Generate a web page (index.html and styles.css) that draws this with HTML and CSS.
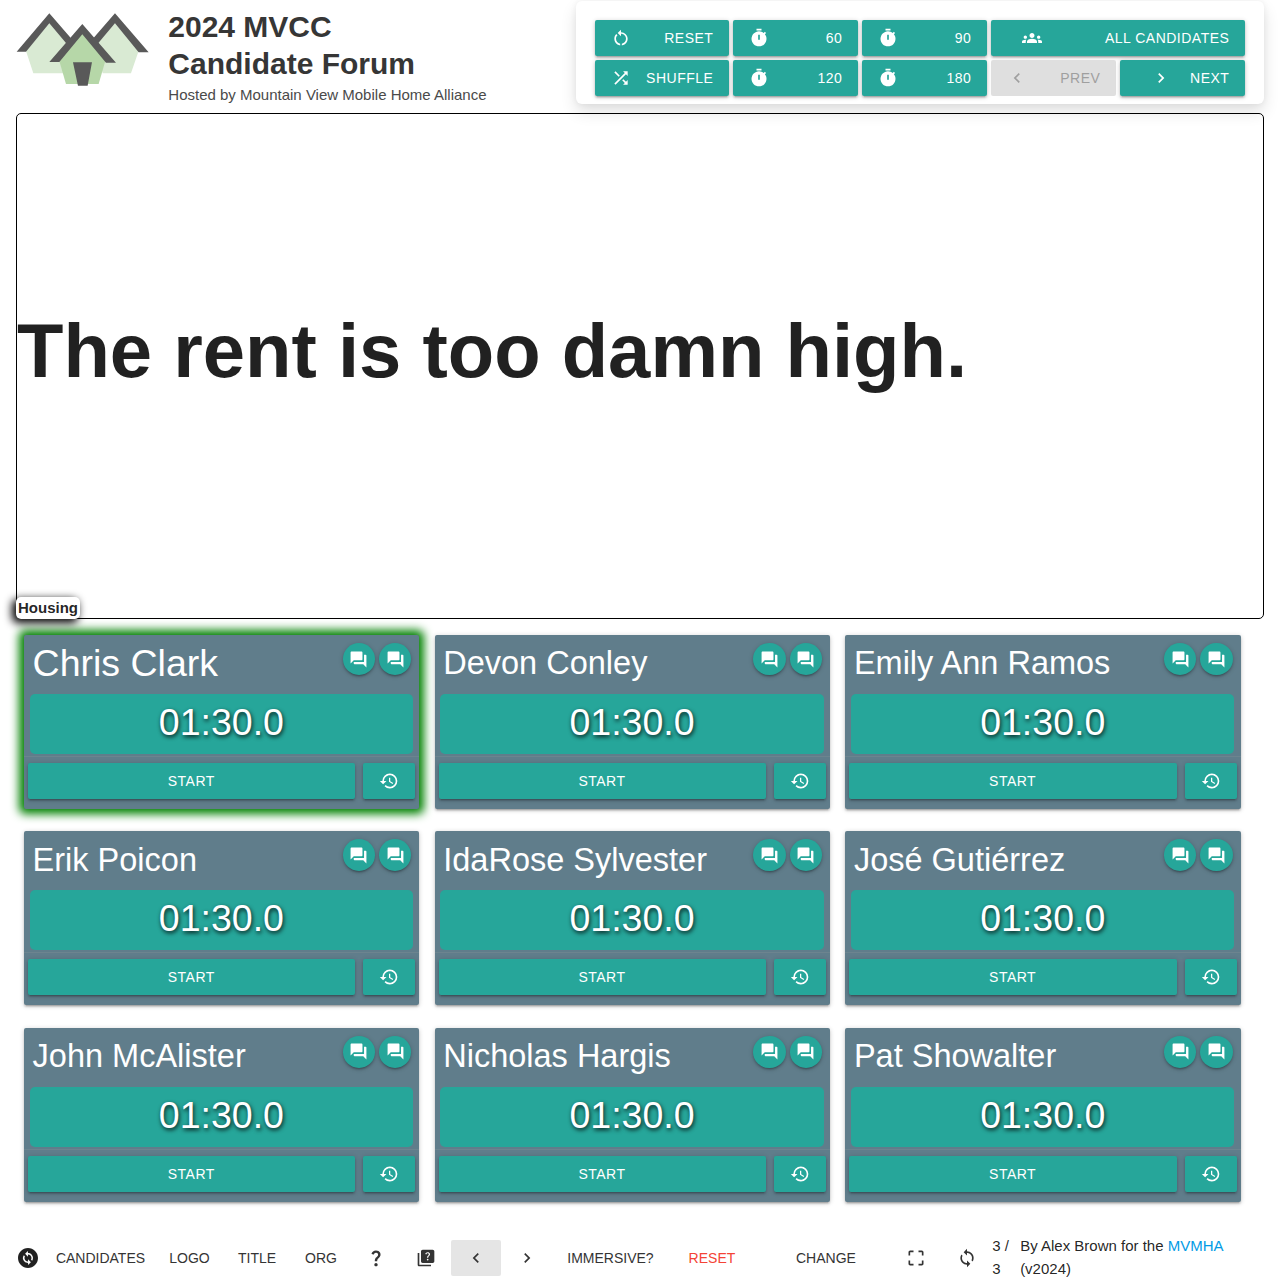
FILE: index.html
```html
<!DOCTYPE html>
<html lang="en">
<head>
<meta charset="utf-8">
<title>2024 MVCC Candidate Forum</title>
<link rel="stylesheet" href="styles.css">
</head>
<body>
<svg class="defs" aria-hidden="true">
  <symbol id="restart" viewBox="0 0 24 24"><path d="M12 5V2L8 6l4 4V7c3.31 0 6 2.69 6 6 0 2.97-2.17 5.43-5 5.91v2.02c3.95-.49 7-3.85 7-7.93 0-4.42-3.58-8-8-8zm-6 8c0-1.65.67-3.15 1.76-4.24L6.34 7.34C4.9 8.79 4 10.79 4 13c0 4.08 3.05 7.44 7 7.93v-2.02c-2.83-.48-5-2.94-5-5.91z"/></symbol>
  <symbol id="shuffle" viewBox="0 0 24 24"><path d="M10.59 9.17L5.41 4 4 5.41l5.17 5.17 1.42-1.41zM14.5 4l2.04 2.04L4 18.59 5.41 20 17.96 7.46 20 9.5V4h-5.5zm.33 9.41l-1.41 1.41 3.13 3.13L14.5 20H20v-5.5l-2.04 2.04-3.13-3.13z"/></symbol>
  <symbol id="timer" viewBox="0 0 24 24"><path d="M9 3V1h6v2zm2 11h2V8h-2zm1 8q-1.85 0-3.488-.712T5.65 19.35t-1.937-2.863T3 13t.713-3.488T5.65 6.65t2.863-1.937T12 4q1.55 0 2.975.5t2.675 1.45l1.4-1.4 1.4 1.4-1.4 1.4Q20 8.6 20.5 10.025T21 13q0 1.85-.713 3.488T18.35 19.35t-2.863 1.938T12 22z"/></symbol>
  <symbol id="groups" viewBox="0 0 24 24"><path d="M12 12.75c1.63 0 3.07.39 4.24.9 1.08.48 1.76 1.56 1.76 2.73V18H6v-1.61c0-1.18.68-2.26 1.76-2.73 1.17-.52 2.61-.91 4.24-.91zM4 13c1.1 0 2-.9 2-2s-.9-2-2-2-2 .9-2 2 .9 2 2 2zm1.13 1.1c-.37-.06-.74-.1-1.13-.1-.99 0-1.93.21-2.78.58A2.01 2.01 0 0 0 0 16.43V18h4.5v-1.61c0-.83.23-1.61.63-2.29zM20 13c1.1 0 2-.9 2-2s-.9-2-2-2-2 .9-2 2 .9 2 2 2zm4 3.43c0-.81-.48-1.53-1.22-1.85A6.95 6.95 0 0 0 20 14c-.39 0-.76.04-1.13.1.4.68.63 1.46.63 2.29V18H24v-1.57zM12 6c1.66 0 3 1.34 3 3s-1.34 3-3 3-3-1.34-3-3 1.34-3 3-3z"/></symbol>
  <symbol id="before" viewBox="0 0 24 24"><path d="M15.41 7.41L14 6l-6 6 6 6 1.41-1.41L10.83 12z"/></symbol>
  <symbol id="next" viewBox="0 0 24 24"><path d="M10 6L8.59 7.41 13.17 12l-4.58 4.59L10 18l6-6z"/></symbol>
  <symbol id="forum" viewBox="0 0 24 24"><path d="M21 6h-2v9H6v2c0 .55.45 1 1 1h11l4 4V7c0-.55-.45-1-1-1zm-4 6V3c0-.55-.45-1-1-1H3c-.55 0-1 .45-1 1v14l4-4h10c.55 0 1-.45 1-1z"/></symbol>
  <symbol id="history" viewBox="0 0 24 24"><path d="M13 3a9 9 0 0 0-9 9H1l3.89 3.89.07.14L9 12H6c0-3.87 3.13-7 7-7s7 3.13 7 7-3.13 7-7 7c-1.93 0-3.68-.79-4.94-2.06l-1.42 1.42A8.954 8.954 0 0 0 13 21a9 9 0 0 0 0-18zm-1 5v5l4.28 2.54.72-1.21-3.5-2.08V8H12z"/></symbol>
  <symbol id="change-circle" viewBox="0 0 24 24"><path d="M12 2C6.48 2 2 6.48 2 12s4.48 10 10 10 10-4.48 10-10S17.52 2 12 2zm.06 17v-2.01H12c-1.28 0-2.56-.49-3.54-1.46a5.006 5.006 0 0 1-.64-6.29l1.1 1.1c-.71 1.33-.53 3.01.59 4.13.7.7 1.62 1.03 2.54 1.01v-2.14l2.83 2.83L12.06 19zm4.11-4.24l-1.1-1.1c.71-1.33.53-3.01-.59-4.13A3.482 3.482 0 0 0 12 8.5h-.06v2.15L9.11 7.83 11.94 5v2.02c1.3-.02 2.61.45 3.6 1.45 1.7 1.7 1.91 4.35.63 6.29z"/></symbol>
  <symbol id="question" viewBox="0 0 24 24"><path d="M11.07 12.85c.77-1.39 2.25-2.21 3.11-3.44.91-1.29.4-3.7-2.18-3.7-1.69 0-2.52 1.28-2.87 2.34L6.54 6.96C7.25 4.83 9.18 3 11.99 3c2.35 0 3.96 1.07 4.78 2.41.7 1.15 1.11 3.3.03 4.9-1.2 1.77-2.35 2.31-2.97 3.45-.25.46-.35.76-.35 2.24h-2.89c-.01-.78-.13-2.05.48-3.15zM14 20c0 1.1-.9 2-2 2s-2-.9-2-2 .9-2 2-2 2 .9 2 2z"/></symbol>
  <symbol id="quiz" viewBox="0 0 24 24"><path d="M4 6H2v14c0 1.1.9 2 2 2h14v-2H4V6zm16-4H8c-1.1 0-2 .9-2 2v12c0 1.1.9 2 2 2h12c1.1 0 2-.9 2-2V4c0-1.1-.9-2-2-2zm-5.99 13c-.59 0-1.05-.47-1.05-1.05 0-.59.47-1.04 1.05-1.04.59 0 1.04.45 1.04 1.04-.01.58-.45 1.05-1.04 1.05zm2.5-6.17c-.63.93-1.23 1.21-1.56 1.81-.13.24-.18.4-.18 1.18h-1.52c0-.41-.06-1.08.26-1.65.41-.73 1.18-1.16 1.63-1.8.48-.68.21-1.94-1.14-1.94-.88 0-1.32.67-1.5 1.23l-1.37-.57C11.51 5.96 12.52 5 13.99 5c1.23 0 2.08.56 2.51 1.26.37.6.58 1.73.01 2.57z"/></symbol>
  <symbol id="crop-free" viewBox="0 0 24 24"><path d="M3 5v4h2V5h4V3H5c-1.1 0-2 .9-2 2zm2 10H3v4c0 1.1.9 2 2 2h4v-2H5v-4zm14 4h-4v2h4c1.1 0 2-.9 2-2v-4h-2v4zm0-16h-4v2h4v4h2V5c0-1.1-.9-2-2-2z"/></symbol>
  <symbol id="loop" viewBox="0 0 24 24"><path d="M12 4V1L8 5l4 4V6c3.31 0 6 2.69 6 6 0 1.01-.25 1.97-.7 2.8l1.46 1.46C19.54 15.03 20 13.57 20 12c0-4.42-3.58-8-8-8zm0 14c-3.31 0-6-2.69-6-6 0-1.01.25-1.97.7-2.8L5.24 7.74C4.46 8.97 4 10.43 4 12c0 4.42 3.58 8 8 8v3l4-4-4-4v3z"/></symbol>
</svg>

<header class="header">
  <svg class="logo" viewBox="48 36 400 224">
    <path fill="#d9ead3" d="M148 70L205 135L190 220H100L78 153zM345 70L288 135L308 220H393L416 153z"/>
    <path fill="#595959" d="M50 155L148 40L213 115L203 135L148 70L78 155zM446 157L345 40L280 115L292 133L345 70L416 157z"/>
    <path fill="#b6d7a8" d="M247 95L316 183L296 252H198L178 183z"/>
    <path fill="#595959" d="M148 186L247 72L348 188H318L247 103L178 186zM219 187H276L263 257H234z"/>
  </svg>
  <div class="heading">
    <h1>2024 MVCC<br>Candidate Forum</h1>
    <p>Hosted by Mountain View Mobile Home Alliance</p>
  </div>
  <div class="panel">
    <button class="btn"><svg class="icon"><use href="#restart"/></svg>RESET</button>
    <button class="btn"><svg class="icon"><use href="#timer"/></svg>60</button>
    <button class="btn"><svg class="icon"><use href="#timer"/></svg>90</button>
    <button class="btn wide inset"><svg class="icon"><use href="#groups"/></svg>ALL CANDIDATES</button>
    <button class="btn"><svg class="icon"><use href="#shuffle"/></svg>SHUFFLE</button>
    <button class="btn"><svg class="icon"><use href="#timer"/></svg>120</button>
    <button class="btn"><svg class="icon"><use href="#timer"/></svg>180</button>
    <button class="btn off"><svg class="icon"><use href="#before"/></svg>PREV</button>
    <button class="btn inset"><svg class="icon"><use href="#next"/></svg>NEXT</button>
  </div>
</header>

<section class="question">
  <h2>The rent is too damn high.</h2>
  <span class="topic">Housing</span>
</section>

<main class="cards" id="cards"></main>

<footer class="footer">
  <svg class="icon mode"><use href="#change-circle"/></svg>
  <a class="flat w-cand">CANDIDATES</a>
  <a class="flat w-logo">LOGO</a>
  <a class="flat w-title">TITLE</a>
  <a class="flat w-org">ORG</a>
  <a class="flat"><svg class="icon"><use href="#question"/></svg></a>
  <a class="flat"><svg class="icon"><use href="#quiz"/></svg></a>
  <a class="flat active"><svg class="icon"><use href="#before"/></svg></a>
  <a class="flat"><svg class="icon"><use href="#next"/></svg></a>
  <a class="flat w-imm">IMMERSIVE?</a>
  <a class="flat w-reset">RESET</a>
  <a class="flat w-change">CHANGE</a>
  <a class="flat"><svg class="icon"><use href="#crop-free"/></svg></a>
  <a class="flat last"><svg class="icon"><use href="#loop"/></svg></a>
  <span class="count">3 / 3</span>
  <span class="credit">By Alex Brown for the <a>MVMHA</a> (v2024)</span>
</footer>
<script src="cards.js"></script>
</body>
</html>
```
FILE: styles.css
```css
* { box-sizing: border-box; }
body {
  margin: 0;
  height: 1280px;
  overflow: hidden;
  background: #fff;
  font: 15px/22.5px "Liberation Sans", Arial, sans-serif;
  color: rgba(0, 0, 0, .87);
}
h1, h2, h3, p { margin: 0; }
.defs { display: none; }
.icon { width: 20px; height: 20px; fill: currentColor; flex: none; display: block; }

.header { display: flex; height: 113px; padding: 1px 16px 0; }
.logo { width: 133.3px; height: 74.7px; margin-top: 11px; }
.heading { margin-left: 19px; padding-top: 7px; color: #363636; }
.heading h1 { font-size: 30px; line-height: 37px; font-weight: 700; }
.heading p { color: #4a4a4a; margin-top: 2px; }

.panel {
  margin-left: auto;
  width: 688px;
  height: 103px;
  padding: 19px 19px 0;
  border-radius: 6px;
  background: #fff;
  box-shadow: 0 8px 16px rgba(0, 0, 0, .12), 0 0 6px rgba(0, 0, 0, .06);
  display: grid;
  grid-template-columns: 134px repeat(4, 125px);
  grid-auto-rows: 36px;
  gap: 4px;
}
.btn {
  display: flex;
  align-items: center;
  justify-content: space-between;
  height: 36px;
  padding: 0 15.6px 0 16px;
  border: 0;
  border-radius: 2px;
  background: #26a69a;
  color: #fff;
  font: 14px/36px "Liberation Sans", Arial, sans-serif;
  letter-spacing: .5px;
  box-shadow: 0 2px 2px 0 rgba(0, 0, 0, .14), 0 3px 1px -2px rgba(0, 0, 0, .12), 0 1px 5px 0 rgba(0, 0, 0, .2);
}
.btn.wide { grid-column: span 2; }
.btn.inset .icon { margin-left: 15px; }
.btn.off { background: #dfdfdf; color: #9f9f9f; box-shadow: none; }

.question {
  position: relative;
  margin: 0 16px;
  height: 506px;
  border: 1px solid #000;
  border-radius: 5px;
  display: flex;
  align-items: center;
  padding-bottom: 30px;
}
.question h2 { font-size: 76px; line-height: 84px; font-weight: 700; white-space: nowrap; }
.topic {
  position: absolute;
  left: -1px;
  bottom: -1px;
  padding: 0 2px;
  height: 22px;
  line-height: 22px;
  border-radius: 5px;
  background: #fff;
  font-weight: 700;
  box-shadow: -3px 3px 9px 1px #000;
}

.cards {
  display: grid;
  grid-template-columns: repeat(3, 395.4px);
  grid-auto-rows: 174px;
  gap: 22.45px 15.27px;
  margin: 16px 0 0 23.9px;
}
.card {
  border-radius: 2px;
  background: #607d8b;
  color: #fff;
  box-shadow: 0 2px 2px 0 rgba(0, 0, 0, .14), 0 3px 1px -2px rgba(0, 0, 0, .12), 0 1px 5px 0 rgba(0, 0, 0, .2);
}
.card.selected { box-shadow: 0 0 10px 5px green; }
.card-top { display: flex; justify-content: space-between; height: 59px; padding: 8px 8px 0 8.7px; }
.card h3 { font-weight: 400; font-size: 32.5px; line-height: 40px; padding-top: .2px; white-space: nowrap; }
.card.selected h3 { font-size: 37.5px; }
.chats { display: flex; gap: 4px; }
.chat {
  width: 32.4px;
  height: 32px;
  border-radius: 50%;
  background: #26a69a;
  display: grid;
  place-items: center;
  box-shadow: 0 2px 2px 0 rgba(0, 0, 0, .14), 0 3px 1px -2px rgba(0, 0, 0, .12), 0 1px 5px 0 rgba(0, 0, 0, .2);
}
.chat .icon { width: 19px; height: 19px; }
.clock {
  height: 60px;
  margin: 0 6.2px 0 5.8px;
  border-radius: 5px;
  background: #26a69a;
  font-size: 37.5px;
  line-height: 57px;
  text-align: center;
  text-shadow: 1px 2px 4px rgba(0, 0, 0, .85);
}
.actions {
  display: flex;
  gap: 8px;
  margin-top: 2px;
  padding: 6px 4px 0;
  border-top: 1px solid rgba(160, 160, 160, .2);
}
.actions .btn { justify-content: center; padding: 0 16px; }
.actions .start { flex: 1; padding: 0 16.6px 0 16px; }

.footer { display: flex; align-items: center; height: 45px; margin-top: 33.6px; padding-left: 16px; }
.icon.mode { width: 24px; height: 24px; }
.flat {
  width: 50.2px;
  height: 36px;
  border-radius: 2px;
  display: flex;
  align-items: center;
  justify-content: center;
  flex: none;
  font-size: 14px;
  line-height: 24px;
  color: #343434;
}
.flat.active { background: #e5e5e5; width: 50px; margin-right: .4px; }
.w-cand { width: 121px; }
.w-logo { width: 57px; }
.w-title { width: 78px; }
.w-org { width: 50px; margin-right: 5px; }
.w-imm { width: 117px; }
.w-reset { width: 86px; color: #f44336; }
.w-change { width: 130px; margin: 0 0 0 6px; }
.last { margin-left: .8px; }
.count { width: 28px; padding-right: 5px; }
.credit { width: 224px; }
.credit a { color: #039be5; }
```
FILE: cards.js
```js
const names = [
  "Chris Clark", "Devon Conley", "Emily Ann Ramos",
  "Erik Poicon", "IdaRose Sylvester", "José Gutiérrez",
  "John McAlister", "Nicholas Hargis", "Pat Showalter"
];
const icon = id => `<svg class="icon"><use href="#${id}"/></svg>`;
document.getElementById("cards").innerHTML = names.map((name, i) => `
  <article class="card${i === 0 ? " selected" : ""}">
    <div class="card-top">
      <h3>${name}</h3>
      <div class="chats"><span class="chat">${icon("forum")}</span><span class="chat">${icon("forum")}</span></div>
    </div>
    <div class="clock">01:30.0</div>
    <div class="actions"><button class="btn start">START</button><button class="btn">${icon("history")}</button></div>
  </article>`).join("");
```
